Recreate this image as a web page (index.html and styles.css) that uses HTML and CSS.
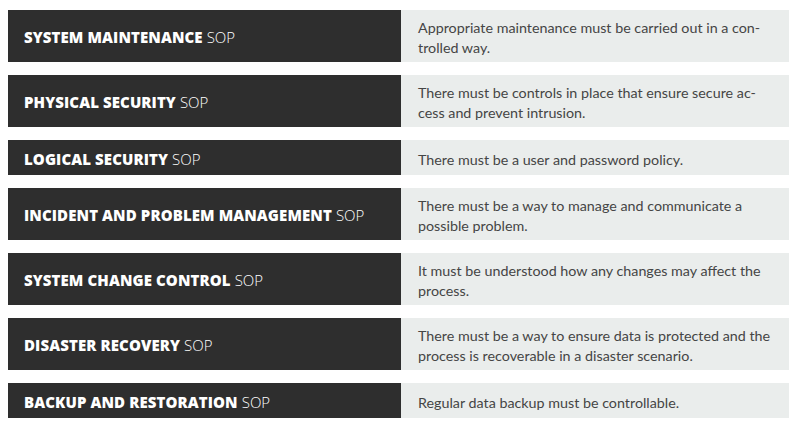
FILE: index.html
```html
<!DOCTYPE html>
<html lang="en">
<head>
<meta charset="utf-8">
<title>SOP overview</title>
<link rel="stylesheet" href="styles.css">
</head>
<body>
<main class="sop-table">
  <div class="row">
    <div class="title"><strong>SYSTEM MAINTENANCE</strong> SOP</div>
    <div class="desc">Appropriate maintenance must be carried out in a con-<br>trolled way.</div>
  </div>
  <div class="row">
    <div class="title"><strong>PHYSICAL SECURITY</strong> SOP</div>
    <div class="desc">There must be controls in place that ensure secure ac-<br>cess and prevent intrusion.</div>
  </div>
  <div class="row">
    <div class="title"><strong>LOGICAL SECURITY</strong> SOP</div>
    <div class="desc">There must be a user and password policy.</div>
  </div>
  <div class="row">
    <div class="title"><strong>INCIDENT AND PROBLEM MANAGEMENT</strong> SOP</div>
    <div class="desc">There must be a way to manage and communicate a<br>possible problem.</div>
  </div>
  <div class="row">
    <div class="title"><strong>SYSTEM CHANGE CONTROL</strong> SOP</div>
    <div class="desc">It must be understood how any changes may affect the<br>process.</div>
  </div>
  <div class="row">
    <div class="title"><strong>DISASTER RECOVERY</strong> SOP</div>
    <div class="desc">There must be a way to ensure data is protected and the<br>process is recoverable in a disaster scenario.</div>
  </div>
  <div class="row">
    <div class="title"><strong>BACKUP AND RESTORATION</strong> SOP</div>
    <div class="desc">Regular data backup must be controllable.</div>
  </div>
</main>
</body>
</html>
```
FILE: styles.css
```css
html, body {
  margin: 0;
  padding: 0;
  background: #ffffff;
}

body {
  font-family: "Lato", "Open Sans", sans-serif;
}

.sop-table {
  display: flex;
  flex-direction: column;
  gap: 13px;
  padding: 10px 0 0 8px;
}

.row {
  display: grid;
  grid-template-columns: 393px 388px;
  min-height: 35px;
}

.title {
  background: #2e2e2e;
  color: #ffffff;
  display: flex;
  align-items: center;
  gap: 4px;
  padding: 2px 16px 0;
  font-family: "Open Sans", "Lato", sans-serif;
  font-size: 15px;
  font-weight: 300;
  white-space: nowrap;
}

.title strong {
  font-weight: 800;
  letter-spacing: 0.1px;
}

.desc {
  background: #eaedec;
  color: #454545;
  display: flex;
  align-items: center;
  padding: 8px 17px 4px;
  font-size: 14.3px;
  font-weight: 400;
  line-height: 20px;
  white-space: nowrap;
}
```
